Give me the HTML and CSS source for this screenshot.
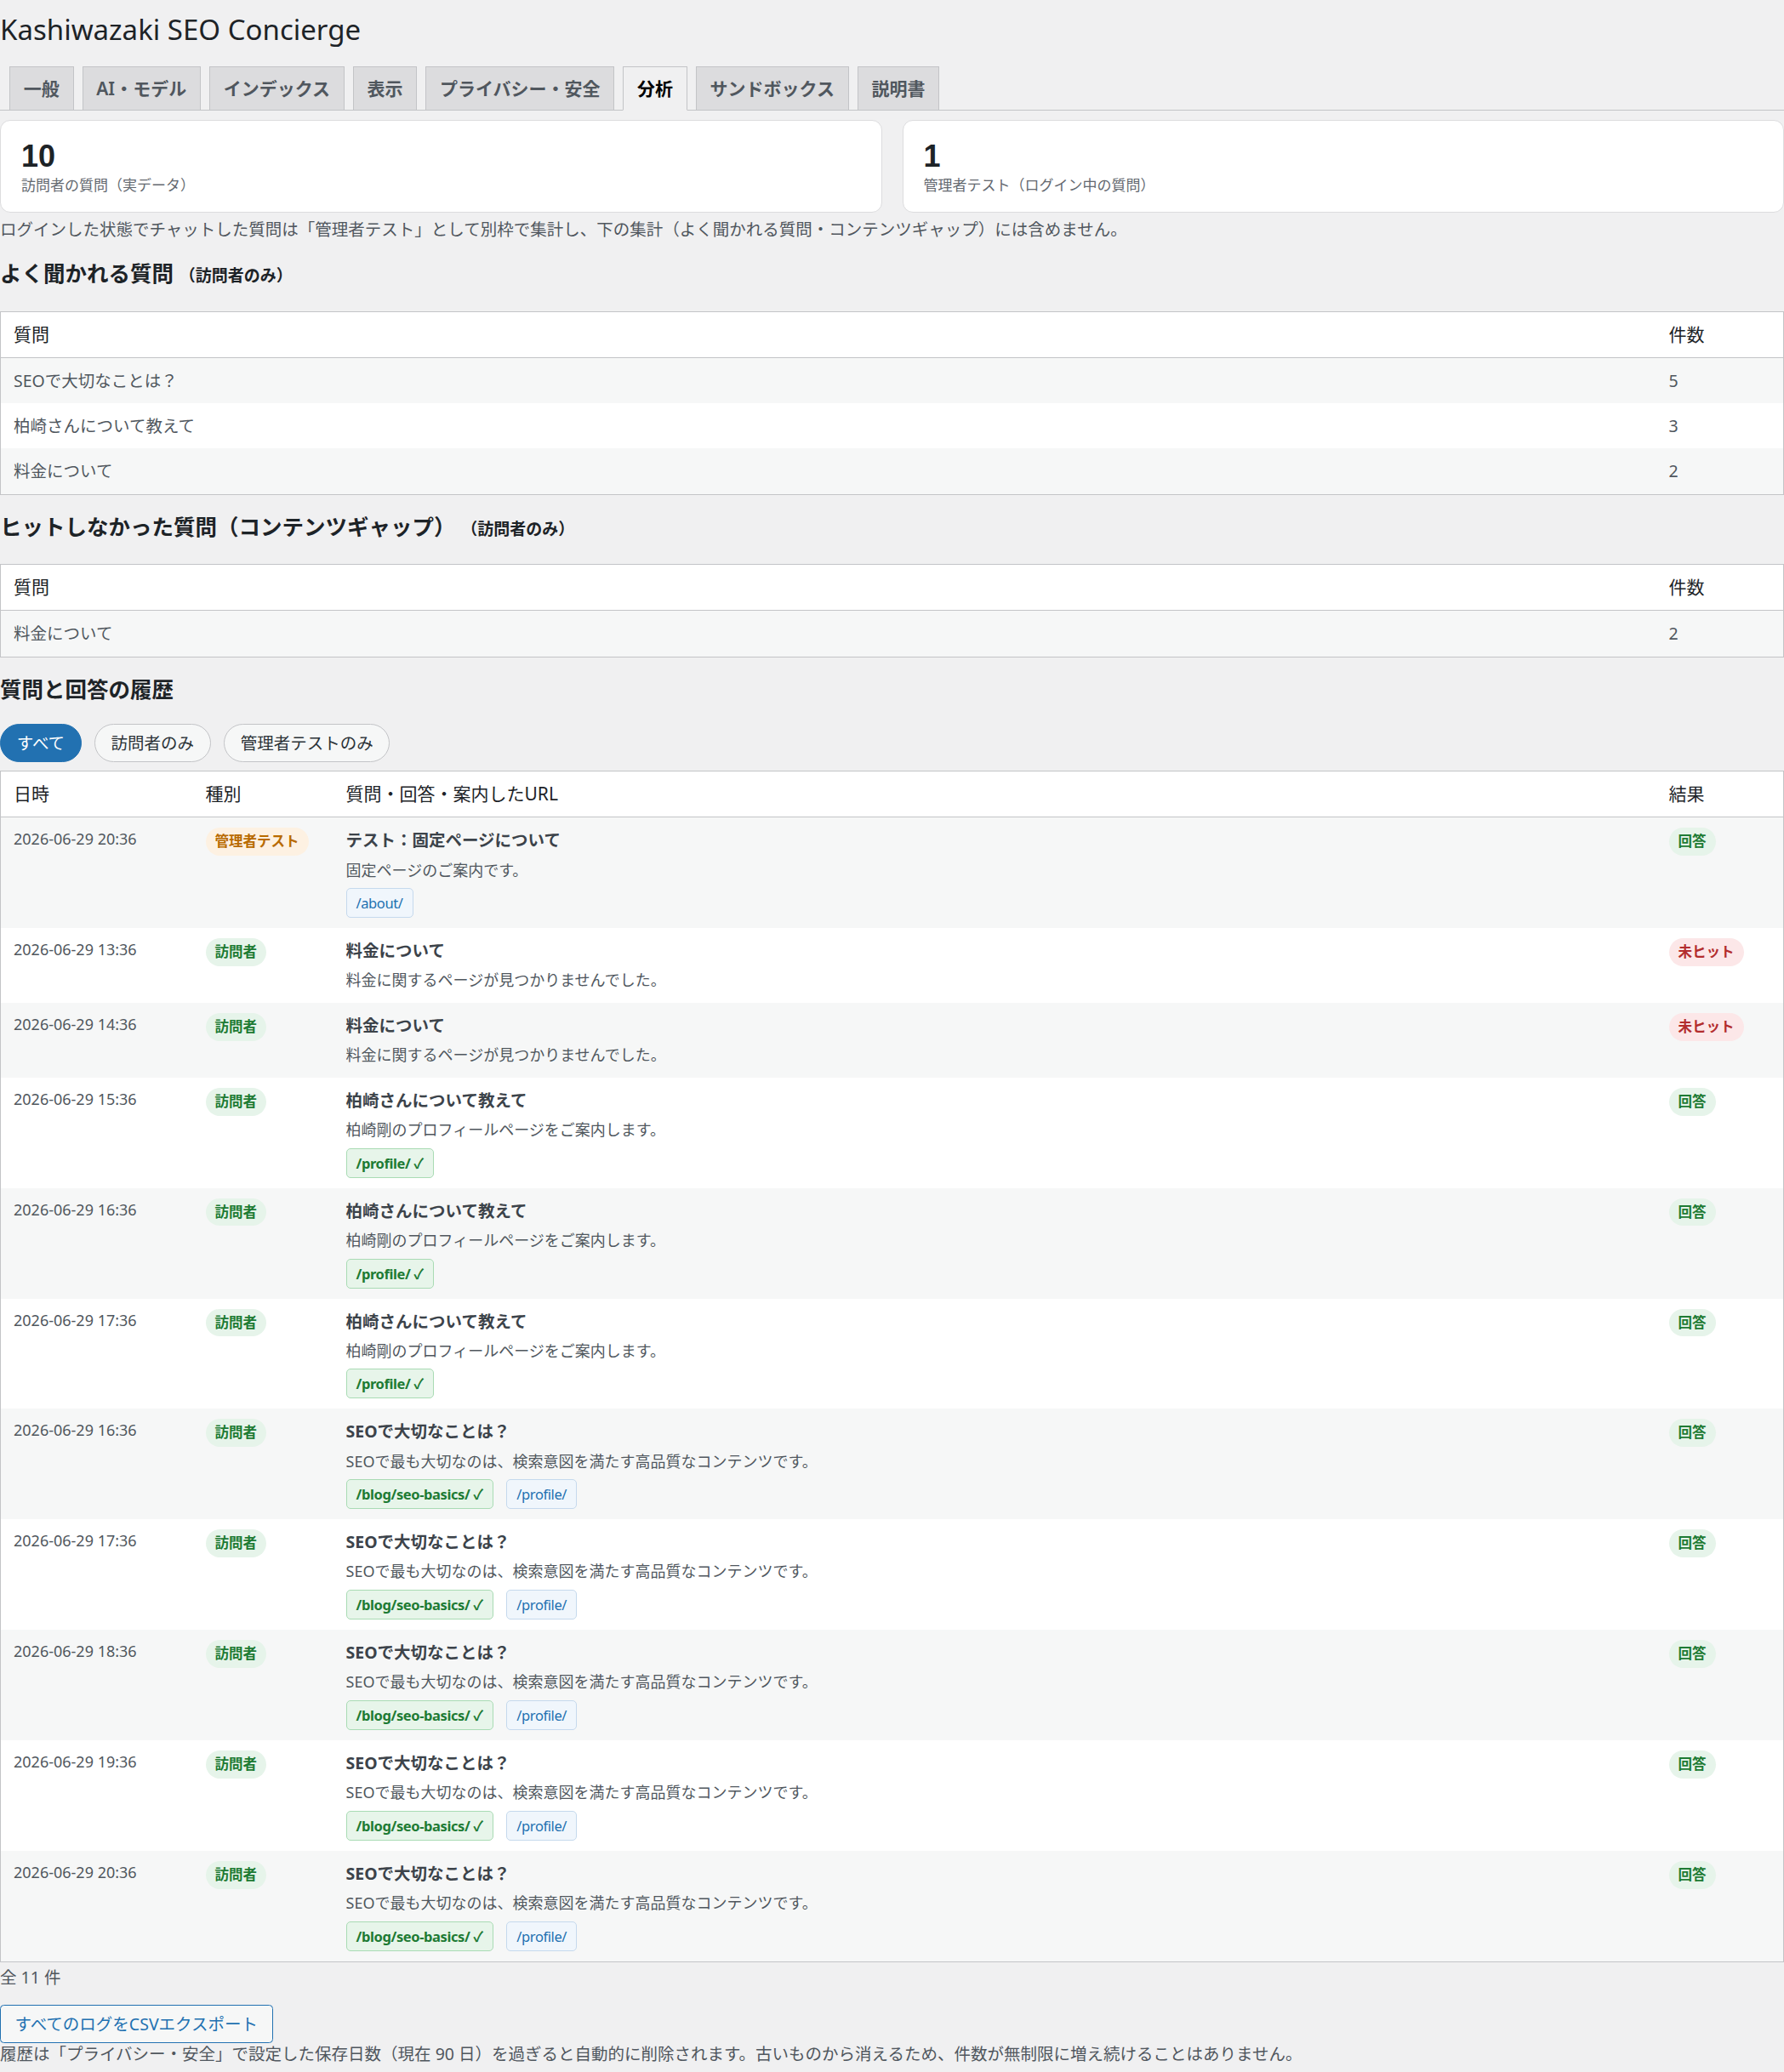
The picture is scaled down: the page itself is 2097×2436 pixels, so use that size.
FILE: index.html
```html
<!DOCTYPE html>
<html lang="ja">
<head>
<meta charset="utf-8">
<title>Kashiwazaki SEO Concierge</title>
<link rel="stylesheet" href="styles.css">
</head>
<body>
<div class="wrap">
  <h1 class="page-title">Kashiwazaki SEO Concierge</h1>
  <nav class="tabs">
    <span class="tab">一般</span>
    <span class="tab">AI・モデル</span>
    <span class="tab">インデックス</span>
    <span class="tab">表示</span>
    <span class="tab">プライバシー・安全</span>
    <span class="tab tab-active">分析</span>
    <span class="tab">サンドボックス</span>
    <span class="tab">説明書</span>
  </nav>

  <div class="stats">
    <div class="stat-card">
      <div class="stat-num">10</div>
      <div class="stat-label">訪問者の質問（実データ）</div>
    </div>
    <div class="stat-card">
      <div class="stat-num">1</div>
      <div class="stat-label">管理者テスト（ログイン中の質問）</div>
    </div>
  </div>
  <p class="note">ログインした状態でチャットした質問は「管理者テスト」として別枠で集計し、下の集計（よく聞かれる質問・コンテンツギャップ）には含めません。</p>

  <h2 class="section-title">よく聞かれる質問 <small>（訪問者のみ）</small></h2>
  <table class="data-table">
    <colgroup><col><col class="col-count"></colgroup>
    <thead><tr><th>質問</th><th>件数</th></tr></thead>
    <tbody>
      <tr class="alt"><td>SEOで大切なことは？</td><td>5</td></tr>
      <tr><td>柏崎さんについて教えて</td><td>3</td></tr>
      <tr class="alt"><td>料金について</td><td>2</td></tr>
    </tbody>
  </table>

  <h2 class="section-title">ヒットしなかった質問（コンテンツギャップ） <small>（訪問者のみ）</small></h2>
  <table class="data-table">
    <colgroup><col><col class="col-count"></colgroup>
    <thead><tr><th>質問</th><th>件数</th></tr></thead>
    <tbody>
      <tr class="alt"><td>料金について</td><td>2</td></tr>
    </tbody>
  </table>

  <h2 class="section-title section-history">質問と回答の履歴</h2>
  <div class="filters">
    <span class="pill pill-active">すべて</span>
    <span class="pill">訪問者のみ</span>
    <span class="pill">管理者テストのみ</span>
  </div>

  <table class="data-table log-table">
    <colgroup><col class="col-date"><col class="col-type"><col><col class="col-count"></colgroup>
    <thead><tr><th>日時</th><th>種別</th><th>質問・回答・案内したURL</th><th>結果</th></tr></thead>
    <tbody>
      <tr class="alt">
        <td class="date">2026-06-29 20:36</td>
        <td><span class="badge badge-admin">管理者テスト</span></td>
        <td><div class="q">テスト：固定ページについて</div><div class="a">固定ページのご案内です。</div><div class="chips"><span class="chip chip-blue">/about/</span></div></td>
        <td><span class="badge badge-ok">回答</span></td>
      </tr>
      <tr>
        <td class="date">2026-06-29 13:36</td>
        <td><span class="badge badge-visitor">訪問者</span></td>
        <td><div class="q">料金について</div><div class="a">料金に関するページが見つかりませんでした。</div></td>
        <td><span class="badge badge-miss">未ヒット</span></td>
      </tr>
      <tr class="alt">
        <td class="date">2026-06-29 14:36</td>
        <td><span class="badge badge-visitor">訪問者</span></td>
        <td><div class="q">料金について</div><div class="a">料金に関するページが見つかりませんでした。</div></td>
        <td><span class="badge badge-miss">未ヒット</span></td>
      </tr>
      <tr>
        <td class="date">2026-06-29 15:36</td>
        <td><span class="badge badge-visitor">訪問者</span></td>
        <td><div class="q">柏崎さんについて教えて</div><div class="a">柏崎剛のプロフィールページをご案内します。</div><div class="chips"><span class="chip chip-green">/profile/ ✓</span></div></td>
        <td><span class="badge badge-ok">回答</span></td>
      </tr>
      <tr class="alt">
        <td class="date">2026-06-29 16:36</td>
        <td><span class="badge badge-visitor">訪問者</span></td>
        <td><div class="q">柏崎さんについて教えて</div><div class="a">柏崎剛のプロフィールページをご案内します。</div><div class="chips"><span class="chip chip-green">/profile/ ✓</span></div></td>
        <td><span class="badge badge-ok">回答</span></td>
      </tr>
      <tr>
        <td class="date">2026-06-29 17:36</td>
        <td><span class="badge badge-visitor">訪問者</span></td>
        <td><div class="q">柏崎さんについて教えて</div><div class="a">柏崎剛のプロフィールページをご案内します。</div><div class="chips"><span class="chip chip-green">/profile/ ✓</span></div></td>
        <td><span class="badge badge-ok">回答</span></td>
      </tr>
      <tr class="alt">
        <td class="date">2026-06-29 16:36</td>
        <td><span class="badge badge-visitor">訪問者</span></td>
        <td><div class="q">SEOで大切なことは？</div><div class="a">SEOで最も大切なのは、検索意図を満たす高品質なコンテンツです。</div><div class="chips"><span class="chip chip-green">/blog/seo-basics/ ✓</span><span class="chip chip-blue">/profile/</span></div></td>
        <td><span class="badge badge-ok">回答</span></td>
      </tr>
      <tr>
        <td class="date">2026-06-29 17:36</td>
        <td><span class="badge badge-visitor">訪問者</span></td>
        <td><div class="q">SEOで大切なことは？</div><div class="a">SEOで最も大切なのは、検索意図を満たす高品質なコンテンツです。</div><div class="chips"><span class="chip chip-green">/blog/seo-basics/ ✓</span><span class="chip chip-blue">/profile/</span></div></td>
        <td><span class="badge badge-ok">回答</span></td>
      </tr>
      <tr class="alt">
        <td class="date">2026-06-29 18:36</td>
        <td><span class="badge badge-visitor">訪問者</span></td>
        <td><div class="q">SEOで大切なことは？</div><div class="a">SEOで最も大切なのは、検索意図を満たす高品質なコンテンツです。</div><div class="chips"><span class="chip chip-green">/blog/seo-basics/ ✓</span><span class="chip chip-blue">/profile/</span></div></td>
        <td><span class="badge badge-ok">回答</span></td>
      </tr>
      <tr>
        <td class="date">2026-06-29 19:36</td>
        <td><span class="badge badge-visitor">訪問者</span></td>
        <td><div class="q">SEOで大切なことは？</div><div class="a">SEOで最も大切なのは、検索意図を満たす高品質なコンテンツです。</div><div class="chips"><span class="chip chip-green">/blog/seo-basics/ ✓</span><span class="chip chip-blue">/profile/</span></div></td>
        <td><span class="badge badge-ok">回答</span></td>
      </tr>
      <tr class="alt">
        <td class="date">2026-06-29 20:36</td>
        <td><span class="badge badge-visitor">訪問者</span></td>
        <td><div class="q">SEOで大切なことは？</div><div class="a">SEOで最も大切なのは、検索意図を満たす高品質なコンテンツです。</div><div class="chips"><span class="chip chip-green">/blog/seo-basics/ ✓</span><span class="chip chip-blue">/profile/</span></div></td>
        <td><span class="badge badge-ok">回答</span></td>
      </tr>
    </tbody>
  </table>

  <p class="total">全 11 件</p>
  <div class="actions"><span class="button">すべてのログをCSVエクスポート</span></div>
  <p class="retention">履歴は「プライバシー・安全」で設定した保存日数（現在 90 日）を過ぎると自動的に削除されます。古いものから消えるため、件数が無制限に増え続けることはありません。</p>
</div>
</body>
</html>
```

FILE: styles.css
```css
html, body {
  margin: 0;
  padding: 0;
  background: #f0f0f1;
}

body {
  font-family: "Noto Sans", "Noto Sans CJK JP", sans-serif;
  font-size: 19.5px;
  line-height: 1.5;
  color: #3c434a;
}

.wrap {
  display: flex;
  flex-direction: column;
}

.page-title {
  margin: 0;
  padding: 14px 0 0;
  font-size: 33px;
  font-weight: 400;
  line-height: 42px;
  color: #1d2327;
}

.tabs {
  display: flex;
  gap: 10px;
  margin-top: 22px;
  padding-left: 11px;
  border-bottom: 1px solid #c3c4c7;
}

.tab {
  display: block;
  padding: 7px 15.75px;
  line-height: 36px;
  font-size: 21px;
  font-weight: 600;
  color: #50575e;
  background: #dcdcde;
  border: 1px solid #c3c4c7;
  border-bottom: none;
}

.tab-active {
  background: #f0f0f1;
  color: #000;
  margin-bottom: -1px;
  border-bottom: 1px solid #f0f0f1;
}

.stats {
  display: grid;
  grid-template-columns: 1fr 1fr;
  gap: 24px;
  margin-top: 11px;
}

.stat-card {
  background: #fff;
  border: 1px solid #dcdcde;
  border-radius: 12px;
  padding: 20px 24px 19px;
}

.stat-num {
  font-family: "Liberation Sans", "Noto Sans", sans-serif;
  font-size: 36px;
  font-weight: 700;
  line-height: 43px;
  color: #1d2327;
}

.stat-label {
  font-size: 17px;
  line-height: 25px;
  color: #646970;
}

.note {
  margin: 5px 0 0;
  color: #50575e;
}

.section-title {
  margin: 20px 0 26px;
  font-size: 25.5px;
  font-weight: 600;
  line-height: 1.4;
  color: #1d2327;
}

.section-title small {
  font-size: 19px;
  font-weight: 600;
}

.section-history {
  margin-bottom: 23px;
}

.data-table {
  width: 100%;
  border-collapse: collapse;
  table-layout: fixed;
  background: #fff;
  border: 1px solid #c3c4c7;
}

.col-count { width: 150px; }
.col-date { width: 226px; }
.col-type { width: 165px; }

.data-table th {
  text-align: left;
  font-weight: 400;
  font-size: 21px;
  line-height: 29px;
  color: #1d2327;
  padding: 12px 15px;
  border-bottom: 1px solid #c3c4c7;
}

.data-table td {
  padding: 12px 15px;
  vertical-align: top;
  line-height: 29.25px;
  color: #50575e;
}

.data-table tr.alt td {
  background: #f6f7f7;
}

.filters {
  display: flex;
  gap: 15px;
  margin-bottom: 10px;
}

.pill {
  display: block;
  padding: 7px 18.75px;
  line-height: 29px;
  border: 1px solid #c3c4c7;
  border-radius: 999px;
  background: #f6f7f7;
  color: #2c3338;
}

.pill-active {
  background: #2271b1;
  border-color: #2271b1;
  color: #fff;
}

.log-table td.date {
  font-size: 18px;
  line-height: 27px;
  color: #50575e;
}

.q {
  font-weight: 700;
  color: #3c434a;
  line-height: 29.25px;
}

.a {
  margin-top: 6px;
  font-size: 18px;
  line-height: 28.6px;
  color: #50575e;
}

.chips {
  display: flex;
  gap: 15.5px;
  margin-top: 7px;
}

.chip {
  display: block;
  padding: 4px 11px;
  font-size: 16.5px;
  line-height: 25px;
  letter-spacing: -0.4px;
  border-radius: 5px;
  border: 1px solid;
}

.chip-blue {
  background: #f0f6fc;
  border-color: #c5d9ed;
  color: #2271b1;
}

.chip-green {
  background: #e7f5ea;
  border-color: #a9dbb4;
  color: #1e7b34;
  font-weight: 700;
}

.badge {
  display: inline-block;
  padding: 4px 11px;
  font-size: 16.5px;
  line-height: 24.75px;
  font-weight: 700;
  border-radius: 999px;
  vertical-align: top;
}

.badge-admin {
  background: #fdf1e2;
  color: #b86a00;
}

.badge-visitor,
.badge-ok {
  background: #e6f4ea;
  color: #1e7b34;
}

.badge-miss {
  background: #fce7e8;
  color: #b32d2e;
}

.total {
  margin: 3px 0 0;
  color: #50575e;
}

.actions {
  display: flex;
  margin-top: 18px;
}

.button {
  display: block;
  padding: 0 16.5px;
  line-height: 43px;
  border: 1px solid #2271b1;
  border-radius: 4.5px;
  background: #f6f7f7;
  color: #2271b1;
}

.retention {
  margin: 0;
  line-height: 1.3;
  color: #50575e;
}
```
